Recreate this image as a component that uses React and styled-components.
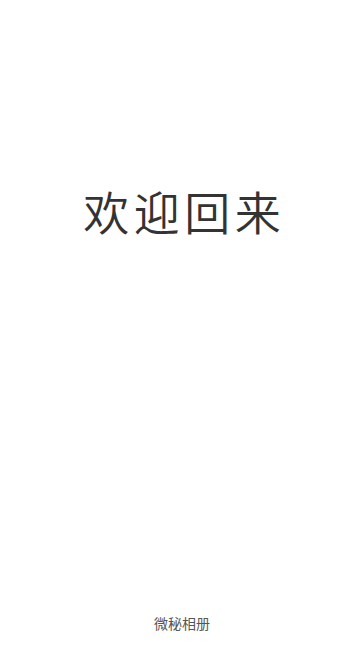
import React from "react";
import styled, { createGlobalStyle } from "styled-components";

const Global = createGlobalStyle`
  html, body { margin: 0; padding: 0; background: #fff; }
  #root { min-height: 100vh; }
`;

const Page = styled.div`
  display: flex;
  flex-direction: column;
  align-items: center;
  min-height: 100vh;
  box-sizing: border-box;
  padding-top: 187px;
  padding-bottom: 18px;
  font-family: "Noto Sans CJK SC", "Noto Sans", sans-serif;
  background: #fff;
`;

const Title = styled.h1`
  margin: 0;
  padding-left: 4.5px;
  font-size: 46px;
  line-height: 46px;
  font-weight: 350;
  color: #333;
  letter-spacing: 4.5px;
`;

const Footer = styled.div`
  margin-top: auto;
  font-size: 14px;
  line-height: 14px;
  color: #555;
  font-weight: 400;
`;

export default function App() {
  return (
    <>
      <Global />
      <Page>
        <Title>欢迎回来</Title>
        <Footer>微秘相册</Footer>
      </Page>
    </>
  );
}
